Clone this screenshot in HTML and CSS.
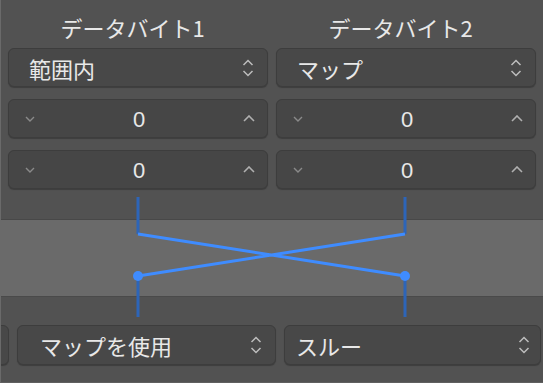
FILE: index.html
```html
<!DOCTYPE html>
<html lang="ja">
<head>
<meta charset="utf-8">
<link rel="stylesheet" href="styles.css">
</head>
<body>
<div class="panel">
  <div class="top">
    <div class="col">
      <div class="title">データバイト1</div>
      <div class="popup"><span class="label">範囲内</span><svg class="updown" width="12" height="20" viewBox="0 0 12 20"><path d="M1.5 7 L6 2.5 L10.5 7 M1.5 13 L6 17.5 L10.5 13" fill="none" stroke="#bdbdbd" stroke-width="1.5"/></svg></div>
      <div class="stepper"><svg class="dn" width="10" height="6" viewBox="0 0 10 6"><path d="M1 1 L5 5 L9 1" fill="none" stroke="#8a8a8a" stroke-width="1.4"/></svg><span class="num">0</span><svg class="up" width="12" height="7" viewBox="0 0 12 7"><path d="M1 6 L6 1 L11 6" fill="none" stroke="#b0b0b0" stroke-width="1.6"/></svg></div>
      <div class="stepper"><svg class="dn" width="10" height="6" viewBox="0 0 10 6"><path d="M1 1 L5 5 L9 1" fill="none" stroke="#8a8a8a" stroke-width="1.4"/></svg><span class="num">0</span><svg class="up" width="12" height="7" viewBox="0 0 12 7"><path d="M1 6 L6 1 L11 6" fill="none" stroke="#b0b0b0" stroke-width="1.6"/></svg></div>
    </div>
    <div class="col">
      <div class="title">データバイト2</div>
      <div class="popup"><span class="label">マップ</span><svg class="updown" width="12" height="20" viewBox="0 0 12 20"><path d="M1.5 7 L6 2.5 L10.5 7 M1.5 13 L6 17.5 L10.5 13" fill="none" stroke="#bdbdbd" stroke-width="1.5"/></svg></div>
      <div class="stepper"><svg class="dn" width="10" height="6" viewBox="0 0 10 6"><path d="M1 1 L5 5 L9 1" fill="none" stroke="#8a8a8a" stroke-width="1.4"/></svg><span class="num">0</span><svg class="up" width="12" height="7" viewBox="0 0 12 7"><path d="M1 6 L6 1 L11 6" fill="none" stroke="#b0b0b0" stroke-width="1.6"/></svg></div>
      <div class="stepper"><svg class="dn" width="10" height="6" viewBox="0 0 10 6"><path d="M1 1 L5 5 L9 1" fill="none" stroke="#8a8a8a" stroke-width="1.4"/></svg><span class="num">0</span><svg class="up" width="12" height="7" viewBox="0 0 12 7"><path d="M1 6 L6 1 L11 6" fill="none" stroke="#b0b0b0" stroke-width="1.6"/></svg></div>
    </div>
  </div>
  <div class="band"></div>
  <div class="bottom">
    <div class="popup stub"></div>
    <div class="popup wide"><span class="label">マップを使用</span><svg class="updown" width="12" height="20" viewBox="0 0 12 20"><path d="M1.5 7 L6 2.5 L10.5 7 M1.5 13 L6 17.5 L10.5 13" fill="none" stroke="#bdbdbd" stroke-width="1.5"/></svg></div>
    <div class="popup thru"><span class="label">スルー</span><svg class="updown" width="12" height="20" viewBox="0 0 12 20"><path d="M1.5 7 L6 2.5 L10.5 7 M1.5 13 L6 17.5 L10.5 13" fill="none" stroke="#bdbdbd" stroke-width="1.5"/></svg></div>
  </div>
  <svg class="wires" width="543" height="383" viewBox="0 0 543 383">
    <g stroke="#2d65b8" stroke-width="3" fill="none">
      <path d="M138 197 V234 M405 197 V234 M138 276 V317 M405 276 V317"/>
    </g>
    <g stroke="#3f8cff" stroke-width="3" fill="none">
      <path d="M138 234 L405 276 M405 234 L138 276"/>
    </g>
    <circle cx="138" cy="276" r="5" fill="#3f8cff"/>
    <circle cx="405" cy="276" r="5" fill="#3f8cff"/>
  </svg>
</div>
</body>
</html>
```
FILE: styles.css
```css
html, body {
  margin: 0;
  padding: 0;
  background: #525252;
}
.panel {
  position: relative;
  width: 543px;
  height: 383px;
  box-sizing: border-box;
  border-left: 1px solid #6a6a6a;
  border-bottom: 1px solid #606060;
  background: #525252;
  overflow: hidden;
  font-family: "Noto Sans CJK JP", "Noto Sans", sans-serif;
  color: #e8e8e8;
}
.top {
  display: grid;
  grid-template-columns: 1fr 1fr;
  column-gap: 8px;
  padding: 0 7px 0 7px;
  height: 219px;
  box-sizing: border-box;
}
.col {
  display: flex;
  flex-direction: column;
}
.title {
  height: 48px;
  padding: 5px 11px 0 0;
  box-sizing: border-box;
  display: flex;
  align-items: center;
  justify-content: center;
  font-size: 22px;
}
.popup {
  height: 39px;
  box-sizing: border-box;
  background: #484848;
  border: 1px solid #3d3d3d;
  border-radius: 6px;
  box-shadow: 0 1px 1px rgba(0,0,0,0.25);
  display: flex;
  align-items: center;
  justify-content: space-between;
  padding: 0 13px 0 20px;
  font-size: 22px;
}
.stepper {
  height: 39px;
  margin-top: 12px;
  box-sizing: border-box;
  background: #464646;
  border: 1px solid #3d3d3d;
  border-radius: 6px;
  box-shadow: 0 1px 1px rgba(0,0,0,0.25);
  display: flex;
  align-items: center;
  justify-content: space-between;
  padding: 0 12px 0 16px;
}
.num {
  font-family: "Liberation Sans", sans-serif;
  font-size: 22px;
  margin-top: 2px;
}
.band {
  height: 78px;
  box-sizing: border-box;
  background: #6a6a6a;
  border-top: 1px solid #484848;
  border-bottom: 1px solid #4a4a4a;
}
.bottom {
  display: flex;
  gap: 8px;
  padding-top: 28px;
  margin-left: -251px;
}
.bottom .popup {
  width: 259px;
  height: 40px;
  flex: none;
}
.bottom .wide {
  padding-left: 22px;
}
.bottom .thru {
  width: 257px;
  padding-left: 11px;
  padding-right: 10px;
}
.wires {
  position: absolute;
  left: -1px;
  top: 0;
  pointer-events: none;
}
```
